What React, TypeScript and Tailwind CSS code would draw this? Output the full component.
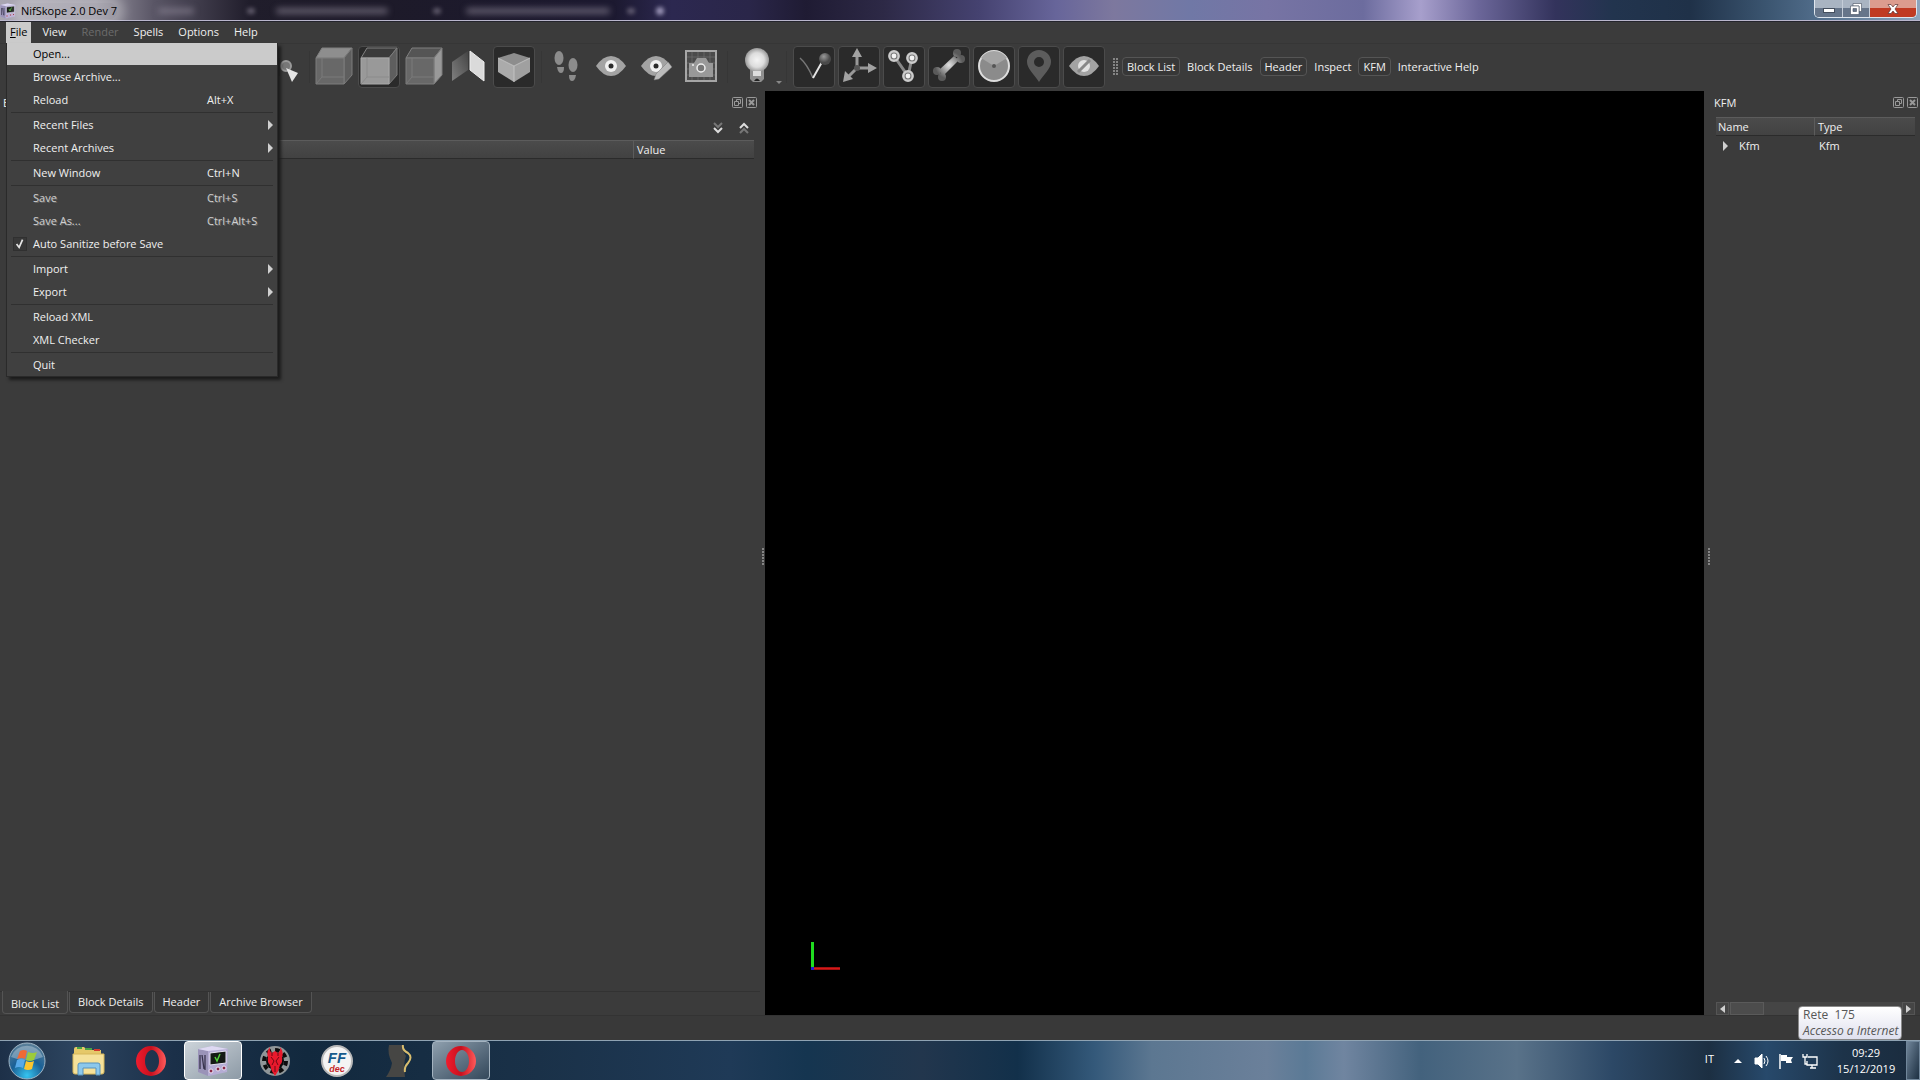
import type { ReactNode } from 'react';
import { clsx } from 'clsx';

interface MenuEntry {
  label: string;
  shortcut?: string;
  submenu?: boolean;
  disabled?: boolean;
  checked?: boolean;
  active?: boolean;
}

const menuBar = ['File', 'View', 'Render', 'Spells', 'Options', 'Help'];

const fileMenu: MenuEntry[][] = [
  [{ label: 'Open...', active: true }, { label: 'Browse Archive...' }, { label: 'Reload', shortcut: 'Alt+X' }],
  [{ label: 'Recent Files', submenu: true }, { label: 'Recent Archives', submenu: true }],
  [{ label: 'New Window', shortcut: 'Ctrl+N' }],
  [
    { label: 'Save', shortcut: 'Ctrl+S', disabled: true },
    { label: 'Save As...', shortcut: 'Ctrl+Alt+S', disabled: true },
    { label: 'Auto Sanitize before Save', checked: true },
  ],
  [{ label: 'Import', submenu: true }, { label: 'Export', submenu: true }],
  [{ label: 'Reload XML' }, { label: 'XML Checker' }],
  [{ label: 'Quit' }],
];

const dockToggles = [
  { label: 'Block List', on: true },
  { label: 'Block Details', on: false },
  { label: 'Header', on: true },
  { label: 'Inspect', on: false },
  { label: 'KFM', on: true },
  { label: 'Interactive Help', on: false },
];

/* ---------- Toolbar icons, all on a 42x42 grid ---------- */

function Cube({ face }: { face: 'top' | 'front' | 'side' }) {
  return (
    <>
      <path d="M3 12 9 2h30l-8 10z" fill={face === 'top' ? '#8e8e8e' : face === 'front' ? '#3a3a3a' : '#555'} stroke="#808080" />
      <path d="M31 12 39 2v27l-8 9z" fill={face === 'side' ? '#999' : '#5e5e5e'} stroke="#7c7c7c" />
      <path d="M3 12h28v26H3z" fill={face === 'front' ? '#999' : '#686868'} stroke={face === 'front' ? '#a8a8a8' : '#7c7c7c'} />
      <path d="M9 12v19h22M9 31l-6 7" fill="none" stroke={face === 'front' ? '#8b8b8b' : '#7a7a7a'} />
    </>
  );
}

function Eye({ children }: { children?: ReactNode }) {
  return (
    <>
      <path d="M6 20Q13 10 21 10T36 20Q29 30 21 30T6 20z" fill="#a3a3a3" />
      {children ?? (
        <>
          <circle cx="21" cy="20" r="6" fill="#f0f0f0" />
          <circle cx="21" cy="20" r="2.5" fill="#2a2a2a" />
        </>
      )}
    </>
  );
}

function ToolButton({ label, on, children }: { label: string; on?: boolean; children: ReactNode }) {
  return (
    <button
      aria-label={label}
      className={clsx('size-[42px] shrink-0 rounded-sm border', on ? 'border-[#4b4b4b] bg-[#2a2a2a]' : 'border-transparent')}
    >
      <svg viewBox="1 1 40 40" className="size-10">
        {children}
      </svg>
    </button>
  );
}

function Separator() {
  return <div className="h-8 w-px shrink-0 bg-[#363636]" />;
}

function Grip() {
  return (
    <svg viewBox="0 0 3 18" className="h-[18px] w-[3px]">
      {[0, 3, 6, 9, 12, 15].map((y) => (
        <rect key={y} x="0" y={y} width="2" height="2" fill="#858585" />
      ))}
    </svg>
  );
}

function Toolbar() {
  return (
    <div className="flex h-12 shrink-0 items-center border-t border-[#363636] pb-0.5 pl-[266px]">
      <ToolButton label="Select object">
        <circle cx="20" cy="20" r="5" fill="#777" stroke="#999" strokeWidth="2" />
        <path d="m20 22 12 5-6 9z" fill="#e4e4e4" />
        <path d="M13 12v18" stroke="#262626" strokeWidth="2" />
      </ToolButton>
      <div className="flex items-center gap-[3px] pl-px">
        <Separator />
        <ToolButton label="View top"><Cube face="top" /></ToolButton>
        <ToolButton label="View front" on><Cube face="front" /></ToolButton>
        <ToolButton label="View side"><Cube face="side" /></ToolButton>
        <ToolButton label="Flip view">
          <path d="m4 16 16-11v19L4 35z" fill="url(#flip)" />
          <path d="m22 5 14 11v19L22 24z" fill="#dadada" stroke="#eee" />
        </ToolButton>
        <ToolButton label="Perspective" on>
          <path d="m5 12 16-5 16 5-16 8z" fill="#8d8d8d" />
          <path d="m5 12 16 8v16L5 26z" fill="#ababab" />
          <path d="m37 12-16 8v16l16-10z" fill="#a0a0a0" />
          <path d="m5 12 16 8 16-8M21 20v16" fill="none" stroke="#c2c2c2" />
        </ToolButton>
      </div>
      <div className="flex items-center gap-[3px] pl-[6px]">
        <Separator />
        <ToolButton label="Walk">
          <ellipse cx="14" cy="12" rx="4.5" ry="7" fill="#8c8c8c" />
          <path d="M12 21h7q0 6-3 6t-4-6z" fill="#8c8c8c" />
          <ellipse cx="28" cy="19" rx="4.5" ry="7" fill="#8c8c8c" />
          <path d="M24 29h7q-1 6-4 6t-3-6z" fill="#8c8c8c" />
        </ToolButton>
        <ToolButton label="Load view"><Eye /></ToolButton>
        <ToolButton label="Save view">
          <Eye />
          <path d="m33 16 4 5-13 12-5 1 2-6z" fill="#bbb" stroke="#777" strokeWidth=".5" />
        </ToolButton>
        <ToolButton label="Screenshot">
          <path d="M6 5h30v30H6z" fill="#4b4b4b" stroke="#a6a6a6" strokeWidth="2" />
          <path d="M12 6v28M18 6v28M24 6v28M30 6v28M7 11h28M7 17h28M7 23h28M7 29h28" stroke="#707070" strokeWidth=".7" />
          <path d="M9 17h5l3-5h9l3 5h4v14H9z" fill="#999" />
          <circle cx="21" cy="22" r="4" fill="#777" stroke="#eee" strokeWidth="1.5" />
          <circle cx="13" cy="19" r="1" fill="#eee" />
        </ToolButton>
      </div>
      <div className="flex items-center gap-2 pl-[5px]">
        <Separator />
        <div className="flex items-end">
          <ToolButton label="Lighting">
            <path d="M14 22h14v11l-3 3h-8l-3-3z" fill="#8f8f8f" />
            <circle cx="21" cy="14" r="12" fill="url(#bulb)" />
            <path d="M17 25v5h8v-5" fill="#ddd" />
            <path d="M18 35q3-5 6 0z" fill="#222" />
          </ToolButton>
          <svg viewBox="0 0 6 12" className="-ml-0.5 h-3 w-1.5"><path d="M0 5h6L3 8z" fill="#888" /></svg>
        </div>
      </div>
      <div className="flex items-center gap-[3px] pl-1">
        <Separator />
        <div />
        <ToolButton label="Show vertices" on>
          <path d="M7 12q7 6 13 20" fill="none" stroke="#777" strokeWidth="1.5" />
          <path d="m20 32 9-16" stroke="#e5e5e5" strokeWidth="2" />
          <circle cx="32" cy="13" r="6" fill="url(#ball)" />
        </ToolButton>
        <ToolButton label="Show axes" on>
          <path d="M19 22V8M19 22h14M19 22 9 32" stroke="#999" strokeWidth="3" />
          <path d="m19 2 5 9H14zM39 22l-9 5V17zM5 36l2-11 8 8z" fill="#a2a2a2" />
          <circle cx="19" cy="22" r="3" fill="#555" />
        </ToolButton>
        <ToolButton label="Show nodes" on>
          <path d="m11 10 14 20 4-18" fill="none" stroke="#888" strokeWidth="3" />
          {[[11, 10], [29, 12], [25, 30]].map(([x, y]) => (
            <g key={x}>
              <circle cx={x} cy={y} r="4.7" fill="#777" stroke="#ccc" strokeWidth="2.4" />
              <circle cx={x} cy={y} r="2.4" fill="#f3f3f3" />
            </g>
          ))}
        </ToolButton>
        <ToolButton label="Show bones" on>
          <g fill="url(#bone)">
            <path d="m11 24 15-14 5 4-16 16z" />
            <circle cx="9" cy="25" r="4" /><circle cx="14" cy="31" r="4" />
            <circle cx="29" cy="7" r="4" /><circle cx="33" cy="13" r="4" />
          </g>
        </ToolButton>
        <ToolButton label="Show constraints" on>
          <circle cx="21" cy="20" r="15" fill="#8b8b8b" stroke="#ddd" strokeWidth="2" />
          <path d="M21 20 8 12q5-7 13-7t13 7z" fill="#a5a5a5" />
          <circle cx="21" cy="20" r="2" fill="#555" />
        </ToolButton>
        <ToolButton label="Show markers" on>
          <path fillRule="evenodd" d="M21 4a12 12 0 0 1 12 12c0 7-8 13-12 20-4-7-12-13-12-20A12 12 0 0 1 21 4zm0 7a5 5 0 1 0 0 10 5 5 0 0 0 0-10z" fill="#5c5c5c" />
        </ToolButton>
        <ToolButton label="Show hidden" on>
          <Eye>
            <circle cx="21" cy="20" r="6" fill="#e2e2e2" />
            <path d="m15 26 12-12" stroke="#888" strokeWidth="3" />
          </Eye>
        </ToolButton>
      </div>
      <div className="flex pl-2">
        <Grip />
        <Grip />
      </div>
      <div className="flex items-center gap-[3px] pl-[3px]">
        {dockToggles.map(({ label, on }) => (
          <button
            key={label}
            className={clsx(
              'h-[19px] rounded-sm border px-1 leading-4 whitespace-nowrap',
              on ? 'border-[#555] bg-[#373737]' : '-mx-px border-transparent',
            )}
          >
            {label}
          </button>
        ))}
      </div>
    </div>
  );
}

function FileMenu() {
  return (
    <div className="absolute top-full left-0 z-20 w-[272px] border border-t-0 border-[#2a2a2a] bg-[#404040] shadow-[3px_3px_3px_#1c1c1c]">
      {fileMenu.map((group, i) => (
        <div key={i} className={clsx(i > 0 && 'pt-px')}>
          {i > 0 && <div className="mx-1 h-px bg-[#303030]" />}
          {group.map((item) => (
            <button
              key={item.label}
              disabled={item.disabled}
              className={clsx(
                'flex w-full items-center text-left',
                item.active ? 'h-[22px] bg-[#cbcbcb] text-black' : 'h-[23px]',
                item.disabled && 'text-[#d0d0d0] [text-shadow:1px_1px_0_#666]',
              )}
            >
              <span className="flex w-[26px] shrink-0 pl-[6px]">
                {item.checked && (
                  <svg viewBox="0 0 14 14" className="size-3.5 border border-[#303030] bg-[#383838]">
                    <path d="m3 7 3 4 4-9" fill="none" stroke="#e5e5e5" strokeWidth="2" />
                  </svg>
                )}
              </span>
              <span className="w-[174px] shrink-0">{item.label}</span>
              <span className="flex-1">{item.shortcut}</span>
              {item.submenu && (
                <svg viewBox="0 0 5 10" className="mr-1 h-2.5 w-[5px]"><path d="m0 0 5 5-5 5z" fill="#d0d0d0" /></svg>
              )}
            </button>
          ))}
        </div>
      ))}
    </div>
  );
}

function DockTitle({ title }: { title: string }) {
  return (
    <div className="flex h-6 items-center">
      <h2 className="flex-1">{title}</h2>
      <div className="flex gap-[3px] pb-0.5">
        <button aria-label={`Float ${title}`}>
          <svg viewBox="0 0 11 11" className="size-[11px]" fill="none" stroke="#999">
            <rect x=".5" y=".5" width="10" height="10" rx="1" />
            <path d="M4.500 4.500v-2h4v4h-2M2.500 4.500h4v4h-4z" />
          </svg>
        </button>
        <button aria-label={`Close ${title}`}>
          <svg viewBox="0 0 11 11" className="size-[11px]" fill="none" stroke="#999">
            <rect x=".5" y=".5" width="10" height="10" rx="1" />
            <path d="m3 3 5 5m0-5L3 8" strokeWidth="2" />
          </svg>
        </button>
      </div>
    </div>
  );
}

const headCell = 'h-[19px] border-t border-b border-t-[#5c5c5c] border-b-[#2b2b2b] bg-linear-to-b from-[#4b4b4b] to-[#424242] p-0 text-left font-normal';

function BlockListDock() {
  return (
    <section className="flex w-[765px] shrink-0">
      <div className="flex min-w-0 flex-1 flex-col">
        <div className="px-[3px]">
          <DockTitle title="Block List" />
        </div>
        <div className="flex h-[25px] items-center justify-end gap-4 pr-[11px]">
          <button aria-label="Expand all">
            <svg viewBox="0 0 10 12" className="h-3 w-2.5" fill="none" strokeWidth="2">
              <path d="m1 1 4 4 4-4" stroke="#777" /><path d="m1 6 4 4 4-4" stroke="#ddd" />
            </svg>
          </button>
          <button aria-label="Collapse all">
            <svg viewBox="0 0 10 12" className="h-3 w-2.5" fill="none" strokeWidth="2">
              <path d="m1 6 4-4 4 4" stroke="#ddd" /><path d="m1 11 4-4 4 4" stroke="#777" />
            </svg>
          </button>
        </div>
        <div className="flex-1 px-[6px]">
          <table className="w-full table-fixed border-separate border-spacing-0">
            <thead>
              <tr>
                <th className={headCell} />
                <th className={clsx(headCell, 'w-[121px] border-l border-l-[#5c5c5c] pl-[3px]')}>Value</th>
              </tr>
            </thead>
          </table>
        </div>
        <div role="tablist" className="flex h-6 items-start gap-px border-t border-[#323232] pl-0.5">
          {['Block List', 'Block Details', 'Header', 'Archive Browser'].map((tab, i) => (
            <button
              key={tab}
              role="tab"
              aria-selected={i === 0}
              className={clsx(
                'rounded-b-sm border border-t-0 border-[#545454] px-2',
                i === 0 ? '-mt-px h-[23px] bg-[#3d3d3d] pt-1' : 'h-[21px] bg-[#363636]',
              )}
            >
              {tab}
            </button>
          ))}
        </div>
      </div>
      <div className="flex items-center pt-2 pl-0.5"><Grip /></div>
    </section>
  );
}

function KfmDock() {
  return (
    <section className="flex w-[216px] shrink-0">
      <div className="flex items-center pt-2 pl-1"><Grip /></div>
      <div className="flex min-w-0 flex-1 flex-col">
        <div className="pr-0.5 pl-[3px]">
          <DockTitle title="KFM" />
        </div>
        <div className="flex-1 px-[5px] pt-0.5">
          <table className="w-full table-fixed border-separate border-spacing-0">
            <thead>
              <tr>
                <th className={clsx(headCell, 'w-[98px] pl-[2px]')}>Name</th>
                <th className={clsx(headCell, 'border-l border-l-[#5c5c5c] pl-[3px]')}>Type</th>
              </tr>
            </thead>
            <tbody>
              <tr className="h-5">
                <td>
                  <div className="flex items-center gap-[11px] pl-[7px]">
                    <svg viewBox="0 0 5 10" className="h-2.5 w-[5px]"><path d="m0 0 5 5-5 5z" fill="#d0d0d0" /></svg>
                    Kfm
                  </div>
                </td>
                <td className="pl-[5px]">Kfm</td>
              </tr>
            </tbody>
          </table>
        </div>
        <div className="mx-[5px] flex h-[13px] bg-[#454545]">
          <button aria-label="Scroll left" className="flex w-[13px] items-center justify-center border border-[#555]">
            <svg viewBox="0 0 5 8" className="h-2 w-[5px]"><path d="M5 0v8L0 4z" fill="#d0d0d0" /></svg>
          </button>
          <div className="ml-px w-[34px] border border-[#5a5a5a] bg-[#4c4c4c]" />
          <div className="flex-1" />
          <button aria-label="Scroll right" className="flex w-[13px] items-center justify-center border border-[#555]">
            <svg viewBox="0 0 5 8" className="h-2 w-[5px]"><path d="M0 0v8l5-4z" fill="#d0d0d0" /></svg>
          </button>
        </div>
      </div>
    </section>
  );
}

/* ---------- Window frame ---------- */

function NifIcon({ className }: { className: string }) {
  return (
    <svg viewBox="0 0 32 32" className={className}>
      <path d="m1 4 14-3 16 3-1 23-18 4-11-4z" fill="#b5acd4" />
      <path d="m1 4 10 2v25L1 27z" fill="#9a93b8" />
      <path d="m1 4 14-3 16 3-20 2z" fill="#ded9f2" />
      <path d="M3 10v14M5 10l2 14M8 10v15" stroke="#39344e" strokeWidth="1.300" />
      <path d="m13 8 16-2v12l-16 2z" fill="#151a15" stroke="#e4e0f2" />
      <path d="m18 12 2 4 3-7" fill="none" stroke="#53d03a" strokeWidth="1.500" />
      <g fill="#8b2a4a" stroke="#e8e4f4"><circle cx="14" cy="26" r="2" /><circle cx="21" cy="24" r="2" /><circle cx="27" cy="23" r="2" /></g>
    </svg>
  );
}

function TitleBar() {
  return (
    <header className="flex h-[22px] shrink-0 items-start overflow-hidden border-b border-[#24242c] bg-[linear-gradient(90deg,#a9a6b2_0%,#96939f_5%,#5a5666_8%,#201d2b_13%,#1d1a29_20%,#1c1930_32%,#2c2850_35%,#2a2649_39%,#1f1b33_42%,#2d2946_46%,#454270_51%,#67659a_55%,#7d789e_58%,#7078a6_62%,#7774a4_66%,#6c6c9e_71%,#a79fcc_74%,#6b6699_77%,#33335c_81%,#22344e_84%,#1f3148_88%,#3b5570_92%,#54708e_95%,#8ea5bd_100%)]">
      <div className="flex h-full min-w-0 flex-1 items-center gap-[5px] border-b border-[#b9b6cc] pt-px">
        <NifIcon className="size-4 shrink-0" />
        <h1 className="rounded-full bg-white/20 leading-4 whitespace-nowrap text-black shadow-[0_0_10px_8px_rgba(255,255,255,0.25)]">NifSkope 2.0 Dev 7</h1>
        <div className="ml-9 h-1.5 w-9 rounded-full bg-[#8d8798]/60 blur-[3px]" />
        <div className="ml-12 h-1.5 w-2 rounded-full bg-[#8d8798]/60 blur-[2px]" />
        <div className="ml-4 h-1.5 w-28 rounded-full bg-[#8d8798]/60 blur-[3px]" />
        <div className="ml-10 h-1.5 w-2 rounded-full bg-[#8d8798]/60 blur-[2px]" />
        <div className="ml-5 h-1.5 w-36 rounded-full bg-[#8d8798]/60 blur-[3px]" />
        <div className="ml-3 h-1.5 w-2 rounded-full bg-[#8d8798]/60 blur-[2px]" />
        <div className="ml-4 h-2 w-2 rounded-full bg-[#b9b3d4]/80 blur-[2px]" />
      </div>
      <div className="flex h-full shrink-0 items-start border-b border-[#b9b6cc] pr-[3px]">
        <div className="flex h-[18px] overflow-hidden rounded-b-[5px] border border-t-0 border-[#dfe6ee]">
          <button aria-label="Minimize" className="flex w-7 items-center justify-center border-r border-[#c5cdd8] bg-linear-to-b from-[#a9b4c2] from-45% to-[#66758a] to-50%">
            <svg viewBox="0 0 12 5" className="mt-1 h-[5px] w-3"><rect x=".5" y=".5" width="11" height="4" fill="#fff" stroke="#454f5e" /></svg>
          </button>
          <button aria-label="Restore" className="flex w-[27px] items-center justify-center border-r border-[#c5cdd8] bg-linear-to-b from-[#a9b4c2] from-45% to-[#66758a] to-50%">
            <svg viewBox="0 0 12 12" className="size-3" stroke="#454f5e" strokeWidth=".6">
              <path d="M3 .5h8.500v8H9V3H3z" fill="#fff" />
              <path fillRule="evenodd" d="M.5 3h8.500v8.500H.5zM3 5.500v3h3.500v-3z" fill="#fff" />
            </svg>
          </button>
          <button aria-label="Close" className="flex w-[46px] items-center justify-center bg-linear-to-b from-[#dc9c8e] from-45% to-[#c03a22] to-50%">
            <svg viewBox="0 0 12 10" className="h-2.5 w-3"><path d="M1 .5h3l2 2.500 2-2.500h3L8 5l3 4.500H8L6 7 4 9.500H1L4 5z" fill="#fff" stroke="#5a3434" strokeWidth=".7" /></svg>
          </button>
        </div>
      </div>
    </header>
  );
}

function OperaIcon() {
  return (
    <svg viewBox="0 0 30 30" className="size-[30px]">
      <path fillRule="evenodd" d="M15 0a15 15 0 1 0 0 30 15 15 0 0 0 0-30zm1 4c4 0 7 5 7 11s-3 11-7 11-7-5-7-11 3-11 7-11z" fill="url(#opera)" />
    </svg>
  );
}

const taskItem = 'flex h-[39px] w-[58px] items-center justify-center rounded-sm border';
const taskIdle = 'border-transparent';
const taskOpen = 'border-[#a4b3c0] bg-linear-to-br from-[#8fa0ae] to-[#34485b]';

function Taskbar() {
  return (
    <footer className="flex h-10 shrink-0 items-center border-t border-[#8fa3b3] bg-[linear-gradient(90deg,#1d3048_0%,#2d4560_4%,#1b3049_9%,#12293e_16%,#1a3148_28%,#1f3a57_38%,#153550_42%,#22364d_48%,#12304a_53%,#34597a_57%,#5c7791_60%,#6b809a_66%,#5b7a96_68%,#7085a0_70%,#43627d_74%,#597289_79%,#2c4866_84%,#1c2f42_89%,#27496b_92%,#1d3349_96%,#1a2b3d_100%)] text-white">
      <button aria-label="Start" className="ml-2">
        <svg viewBox="0 0 38 38" className="size-[38px]">
          <circle cx="19" cy="19" r="18" fill="url(#orb)" stroke="#9fb4c4" />
          <path d="M3 15A17 17 0 0 1 35 15Q19 22 3 15z" fill="#fff" opacity=".3" />
          <path d="M12 9q4-2 7 0l-2 8q-3-2-8 0z" fill="#ef6a35" />
          <path d="M20 10q5 2 9 0l-3 8q-4 2-8 0z" fill="#9ccb3b" />
          <path d="M9 18q4-2 8 0l-2 8q-4-2-8 0z" fill="#57a9e8" />
          <path d="M18 19q4 2 8 0l-2 8q-4 2-8 0z" fill="#fbc52e" />
        </svg>
      </button>
      <nav className="flex flex-1 items-center gap-1 pl-[14px]">
        <button aria-label="Explorer" className={clsx(taskItem, taskIdle)}>
          <svg viewBox="0 0 34 30" className="h-[30px] w-[34px]">
            <path d="M2 3q0-2 2-2h8l3 3h14v22H4q-2 0-2-2z" fill="#e5c869" />
            <path d="M5 2h5M13 3h7" stroke="#4ba345" strokeWidth="2" /><path d="M22 4h6" stroke="#d23b2e" strokeWidth="2" />
            <path d="M1 8h31v18q0 2-2 2H3q-2 0-2-2z" fill="#f5e19a" stroke="#d6b75b" />
            <path d="M6 29V19q0-2 2-2h18q2 0 2 2v10h-4v-7H11v7z" fill="#8cc8ec" stroke="#5792bd" />
          </svg>
        </button>
        <button aria-label="Opera" className={clsx(taskItem, taskIdle)}><OperaIcon /></button>
        <button aria-label="NifSkope" className={clsx(taskItem, 'border-white bg-linear-to-br from-[#cdd4da] to-[#8d9aa6]')}>
          <NifIcon className="size-8" />
        </button>
        <button aria-label="Creation Kit" className={clsx(taskItem, taskIdle)}>
          <svg viewBox="0 0 32 32" className="size-8">
            <circle cx="16" cy="16" r="15" fill="#8f9698" />
            <circle cx="16" cy="16" r="9" fill="#0d0d0d" />
            <circle cx="16" cy="16" r="11" fill="none" stroke="#0d0d0d" strokeWidth="4" strokeDasharray="4.600 4" />
            <path d="M11 2q-1 4 2 6l3-2 3 2q3-2 2-6 4 5 2 10 1 5-2 8-1 6-5 11-4-5-5-11-3-3-2-8-2-5 2-10z" fill="#e8192c" />
            <path d="m12 12 3 4-2 4M20 12l-3 4 2 4M16 21v6M13 8v3M19 8v3" fill="none" stroke="#6d0914" />
          </svg>
        </button>
        <button aria-label="FFDec" className={clsx(taskItem, taskIdle)}>
          <svg viewBox="0 0 32 32" className="size-8">
            <circle cx="16" cy="16" r="15" fill="#f4f4f4" stroke="#b9b9b9" strokeWidth="2" />
            <text x="16" y="18" textAnchor="middle" fontFamily="Liberation Sans, sans-serif" fontWeight="bold" fontStyle="italic" fontSize="15" fill="#155a8c">FF</text>
            <text x="16" y="27" textAnchor="middle" fontFamily="Liberation Sans, sans-serif" fontWeight="bold" fontStyle="italic" fontSize="9" fill="#c51f28">dec</text>
          </svg>
        </button>
        <button aria-label="BodySlide" className={clsx(taskItem, taskIdle)}>
          <svg viewBox="0 0 32 32" className="size-8">
            <path d="M6 0h15q-2 6 2 11-3 7-1 21H3q5-7 6-14Q4 8 6 0z" fill="#464644" />
            <path d="M20 0q-1 5 5 8 5 4 0 10-4 4-3 9" fill="none" stroke="#d8bd6e" strokeWidth="2" />
          </svg>
        </button>
        <button aria-label="Opera window" className={clsx(taskItem, taskOpen)}><OperaIcon /></button>
      </nav>
      <div className="flex items-center gap-2">
        <span className="mr-2 pb-1">IT</span>
        <button aria-label="Show hidden icons" className="w-4">
          <svg viewBox="0 0 8 4" className="mx-auto h-1 w-2"><path d="M0 4h8L4 0z" fill="#fff" /></svg>
        </button>
        <svg viewBox="0 0 16 16" className="size-4" fill="none" stroke="#fff">
          <path d="M1 5h3l4-4v14l-4-4H1z" fill="#fff" /><path d="M10 5q2 3 0 6M12 3q4 5 0 10" />
        </svg>
        <svg viewBox="0 0 16 16" className="size-4">
          <path d="M2 1v15" stroke="#fff" strokeWidth="1.500" /><path d="M3 2h6v2h6l-2 3 1 3H8V8H3z" fill="#fff" />
        </svg>
        <svg viewBox="0 0 16 16" className="size-4" fill="none" stroke="#fff" strokeWidth="1.300">
          <path d="M6 4h9v8H5V8M8 15h6M10 12v3M1 1v3h4V1M3 4v7h2" />
        </svg>
        <button className="w-20 text-center leading-4">
          09:29<br />15/12/2019
        </button>
      </div>
      <button aria-label="Show desktop" className="h-full w-[14px] border border-[#70869a] bg-linear-to-br from-[#71869a] to-[#1d3042]" />
    </footer>
  );
}

function Gradients() {
  return (
    <svg className="absolute size-0" aria-hidden>
      <defs>
        <linearGradient id="flip" x1="0" y1="1" x2="1" y2="0"><stop offset="0" stopColor="#808080" /><stop offset="1" stopColor="#444" /></linearGradient>
        <linearGradient id="opera" x1="0" x2="1"><stop offset="0" stopColor="#f01c2e" /><stop offset=".5" stopColor="#c8101e" /><stop offset="1" stopColor="#ff5a5a" /></linearGradient>
        <radialGradient id="bulb"><stop offset="0" stopColor="#f4f4f4" /><stop offset=".6" stopColor="#ddd" /><stop offset="1" stopColor="#999" /></radialGradient>
        <radialGradient id="ball" cx=".4" cy=".3"><stop offset="0" stopColor="#999" /><stop offset="1" stopColor="#4a4a4a" /></radialGradient>
        <radialGradient id="bone" gradientUnits="userSpaceOnUse" cx="21" cy="19" r="14"><stop offset="0" stopColor="#e2e2e2" /><stop offset="1" stopColor="#5a5a5a" /></radialGradient>
        <radialGradient id="orb" cx=".5" cy=".9" r=".9"><stop offset="0" stopColor="#35c4f0" /><stop offset=".5" stopColor="#1a6096" /><stop offset="1" stopColor="#5d8098" /></radialGradient>
      </defs>
    </svg>
  );
}

export default function App() {
  return (
    <div className="relative flex h-screen flex-col overflow-hidden bg-[#3b3b3b] font-['Open_Sans','Noto_Sans',sans-serif] text-[11px] leading-4 text-[#f0f0f0]">
      <Gradients />
      <TitleBar />

      <nav className="flex h-[21px] shrink-0 gap-[7px] pl-[6px]">
        {menuBar.map((name) =>
          name === 'File' ? (
            <div key={name} className="relative bg-[#cbcbcb] text-black">
              <button className="h-full px-1 pb-0.5"><span className="underline">F</span>ile</button>
              <div className="text-[#f0f0f0]"><FileMenu /></div>
            </div>
          ) : (
            <button key={name} disabled={name === 'Render'} className="px-1 pb-0.5 disabled:text-[#6c6c6c]">{name}</button>
          ),
        )}
      </nav>

      <Toolbar />

      <main className="flex min-h-0 flex-1">
        <BlockListDock />
        {/* Render viewport with the orientation gizmo in its corner */}
        <div className="flex min-w-0 flex-1 items-end bg-black pb-[42px] pl-[44px]">
          <svg viewBox="0 0 32 32" className="size-8">
            <path d="M3.500 1v26" stroke="#1fdc1f" strokeWidth="3" />
            <path d="M4 27.500h27" stroke="#d81818" strokeWidth="2.500" />
            <path d="M2 26h3v3H2z" fill="#2020d0" />
          </svg>
        </div>
        <KfmDock />
      </main>

      <div className="h-[25px] shrink-0 border-t border-[#333] bg-[#393939]" />
      <Taskbar />

      <div role="tooltip" className="absolute right-[18px] bottom-10 z-30 w-[104px] rounded-sm border border-[#8a8a8a] bg-linear-to-b from-white to-[#dfe0ee] pl-1 text-xs whitespace-nowrap text-[#575757]">
        <div>Rete&nbsp; 175</div>
        <div className="italic">Accesso a Internet</div>
      </div>
    </div>
  );
}
